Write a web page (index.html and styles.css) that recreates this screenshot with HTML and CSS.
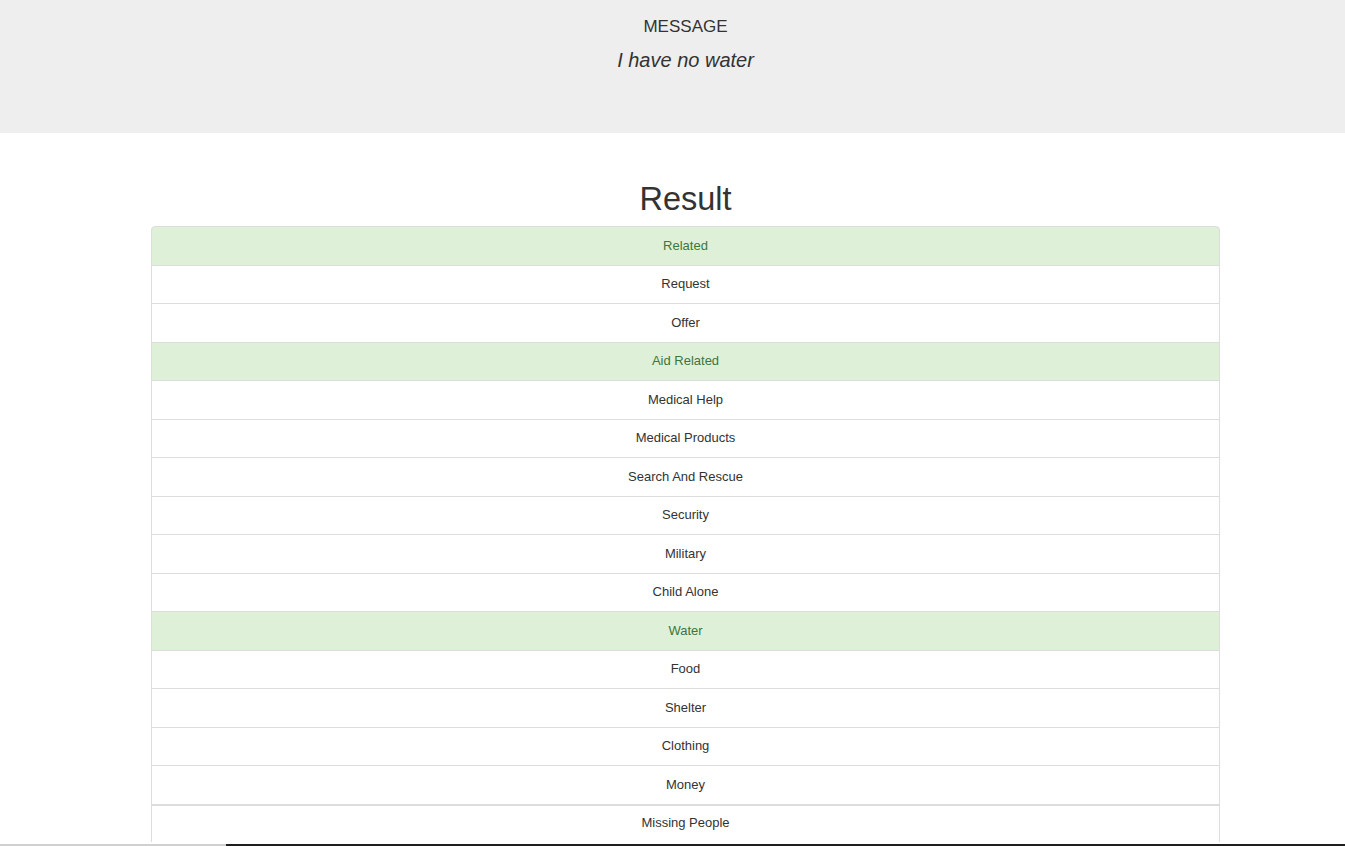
FILE: index.html
```html
<!DOCTYPE html>
<html lang="en">
<head>
<meta charset="utf-8">
<title>Result</title>
<link rel="stylesheet" href="styles.css">
</head>
<body>
<div class="page">
  <header class="jumbotron">
    <p class="label">MESSAGE</p>
    <p class="message">I have no water</p>
  </header>
  <main class="container">
    <h1 class="title">Result</h1>
    <ul class="list-group">
      <li class="item success first">Related</li>
      <li class="item">Request</li>
      <li class="item">Offer</li>
      <li class="item success">Aid Related</li>
      <li class="item">Medical Help</li>
      <li class="item">Medical Products</li>
      <li class="item">Search And Rescue</li>
      <li class="item">Security</li>
      <li class="item">Military</li>
      <li class="item">Child Alone</li>
      <li class="item success">Water</li>
      <li class="item">Food</li>
      <li class="item">Shelter</li>
      <li class="item">Clothing</li>
      <li class="item">Money</li>
      <li class="item split">Missing People</li>
    </ul>
  </main>
</div>
<div class="taskbar"></div>
</body>
</html>
```
FILE: styles.css
```css
html {
  overflow: hidden;
}
body {
  margin: 0;
  font-family: "Liberation Sans", Arial, sans-serif;
  color: #333;
  background: #fff;
}
.page {
  width: 1371px;
}
.jumbotron {
  background: #eee;
  height: 133px;
  box-sizing: border-box;
  padding-top: 17px;
  text-align: center;
}
.label {
  margin: 0;
  font-size: 17px;
  line-height: 20px;
}
.message {
  margin: 11px 0 0;
  font-size: 20px;
  line-height: 24px;
  font-style: italic;
}
.container {
  width: 1069px;
  margin: 0 auto;
}
.title {
  margin: 42px 0 0;
  padding-bottom: 3px;
  font-size: 32.5px;
  line-height: 48px;
  font-weight: normal;
  text-align: center;
  height: 48px;
}
.list-group {
  list-style: none;
  margin: 0;
  padding: 0;
}
.item {
  font-size: 13px;
  line-height: 19.5px;
  padding: 8.5px 15px 9.5px;
  border: 1px solid #ddd;
  margin-bottom: -1px;
  text-align: center;
  background: #fff;
}
.item.first {
  border-top-left-radius: 4px;
  border-top-right-radius: 4px;
}
.item.success {
  background: #dff0d8;
  color: #3c763d;
}
.item.split {
  border-top-width: 2px;
  padding-top: 7.5px;
}
.taskbar {
  position: fixed;
  left: 0;
  right: 0;
  bottom: 0;
  height: 2px;
  background: linear-gradient(to right, #d0d0d0 0, #d0d0d0 226px, #1e1e1e 226px);
}
```
